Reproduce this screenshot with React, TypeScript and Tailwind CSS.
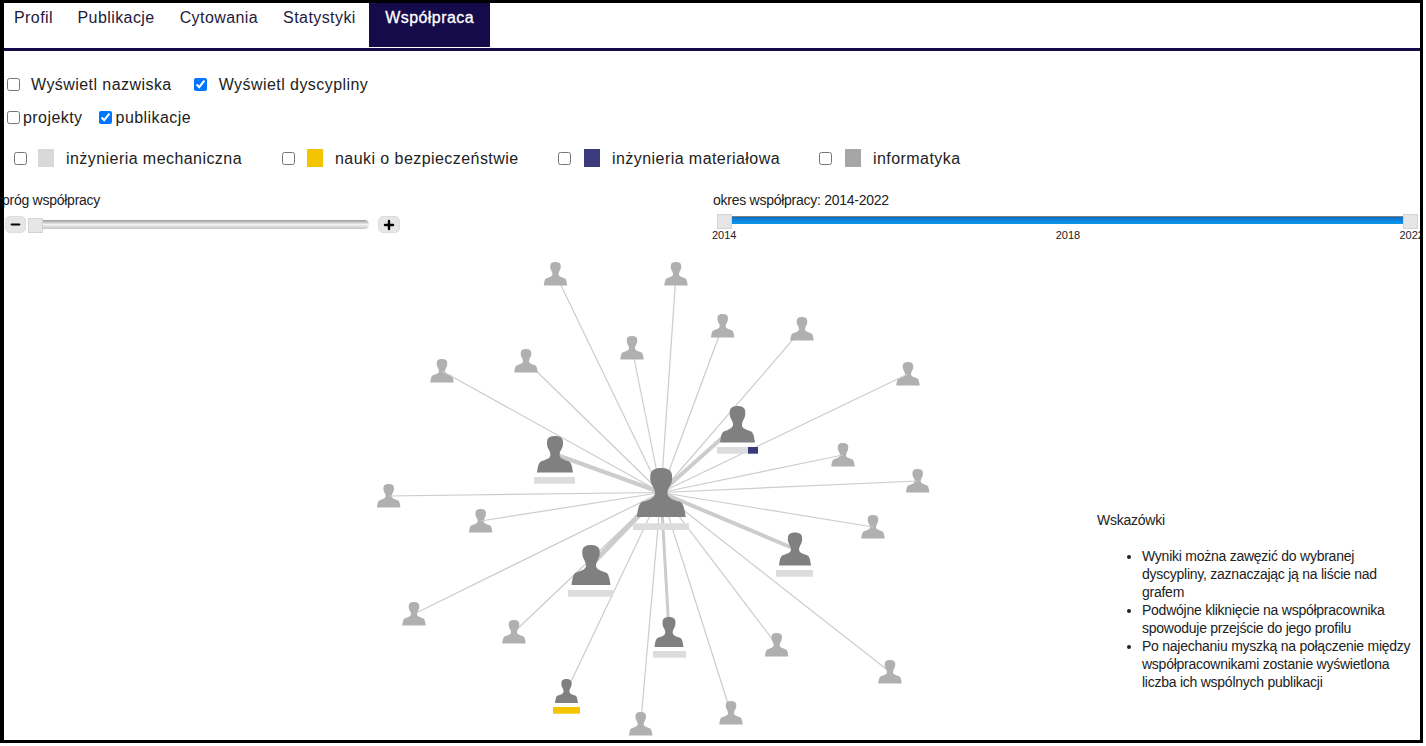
import { Minus, Plus } from "lucide-react";

const CX = 661;
const CY = 492.5;
const PERSON =
  "M50 0C60 0 71 3 72 14C73 24 72 30 67 38C64 44 62 48 63 54C65 62 76 65 88 69C95 72 97 80 100 100L0 100C3 80 5 72 12 69C24 65 35 62 37 54C38 48 36 44 33 38C28 30 27 24 28 14C29 3 40 0 50 0Z";

const small: [number, number, boolean][] = [
  [555.5, 262, false],
  [526, 349, false],
  [632, 336, false],
  [442, 359, true],
  [388.7, 484, true],
  [676, 262, false],
  [722.7, 314, false],
  [802, 317, false],
  [908, 362, true],
  [843, 443, true],
  [917.7, 469, true],
  [480.7, 509, true],
  [414, 602, false],
  [514, 620, false],
  [640.7, 712, false],
  [873, 515, true],
  [776.7, 633, false],
  [890, 660, false],
  [731, 701, false],
];

type Dark = {
  x: number;
  top: number;
  bottom: number;
  w: number;
  barX: number;
  barW: number;
  barY: number;
  edge: number;
  color?: string;
  extra?: number;
};

const dark: Dark[] = [
  { x: 555, top: 436, bottom: 472.5, w: 36, barX: 534, barW: 41, barY: 477, edge: 4 },
  { x: 737.5, top: 406, bottom: 442.5, w: 35, barX: 717, barW: 31, barY: 447, edge: 4, extra: 10 },
  { x: 795, top: 532.5, bottom: 565.5, w: 32, barX: 776, barW: 37, barY: 570, edge: 4 },
  { x: 591, top: 545, bottom: 585, w: 39, barX: 568, barW: 45, barY: 590, edge: 5 },
  { x: 669, top: 617, bottom: 647, w: 29, barX: 653, barW: 33, barY: 651, edge: 3 },
  { x: 566.5, top: 679, bottom: 703, w: 23, barX: 553, barW: 27, barY: 707, edge: 1.2, color: "#f5c400" },
];

function Person({ x, top, bottom, w, fill }: { x: number; top: number; bottom: number; w: number; fill: string }) {
  const h = bottom - top;
  return (
    <path d={PERSON} fill={fill} transform={`translate(${x - w / 2} ${top}) scale(${w / 100} ${h / 100})`} />
  );
}

function Graph() {
  return (
    <svg width={1090} height={495} viewBox="4 245 1090 495" className="block shrink-0">
      {small
        .filter((n) => !n[2])
        .map(([x, top]) => (
          <line key={x} x1={CX} y1={CY} x2={x} y2={top + 12} stroke="#cccccc" strokeWidth={1.2} />
        ))}
      {dark.map((n) => (
        <line key={n.x} x1={CX} y1={CY} x2={n.x} y2={(n.top + n.bottom) / 2} stroke="#cccccc" strokeWidth={n.edge} />
      ))}
      {small.map(([x, top]) => (
        <Person key={x} x={x} top={top} bottom={top + 23.5} w={23.5} fill="#b0b0b0" />
      ))}
      {small
        .filter((n) => n[2])
        .map(([x, top]) => (
          <line key={x} x1={CX} y1={CY} x2={x} y2={top + 12} stroke="#cccccc" strokeWidth={1.2} />
        ))}
      {dark.map((n) => (
        <g key={n.x}>
          <Person x={n.x} top={n.top} bottom={n.bottom} w={n.w} fill="#808080" />
          <rect x={n.barX} y={n.barY} width={n.barW} height={6.7} fill={n.color ?? "#dcdcdc"} />
          {n.extra ? <rect x={n.barX + n.barW} y={n.barY} width={n.extra} height={6.7} fill="#3a3a7c" /> : null}
        </g>
      ))}
      <Person x={661.2} top={468} bottom={517} w={49} fill="#808080" />
      <rect x={633} y={523.3} width={56} height={6.7} fill="#dcdcdc" />
    </svg>
  );
}

const tabs = ["Publikacje", "Cytowania", "Statystyki"];

const disciplines = [
  { name: "inżynieria mechaniczna", color: "bg-[#d9d9d9]", cls: "ml-[10px] w-[268px]", gap: "ml-[11px]" },
  { name: "nauki o bezpieczeństwie", color: "bg-[#f5c400]", cls: "w-[276px]", gap: "ml-[12px]" },
  { name: "inżynieria materiałowa", color: "bg-[#3a3a7c]", cls: "w-[261px]", gap: "ml-[13px]" },
  { name: "informatyka", color: "bg-[#a6a6a6]", cls: "", gap: "ml-[13px]" },
];

const sliderHandle = "bg-[#e6e6e6] border border-[#d3d3d3]";

export default function App() {
  return (
    <div className="min-h-[746px] bg-white font-['Liberation_Sans',Arial,sans-serif] text-[#222222]">
      <div className="w-[1423px] h-[743px] border-[3px] border-l-4 border-black overflow-hidden">
        <nav className="flex h-[45px] border-b-[3px] border-[#150a4a] box-content tracking-[0.42px]">
          <a className="pl-[10px] pr-[12px] h-[30px] text-[16px] leading-[30px] text-[#1d1a40]">Profil</a>
          {tabs.map((t) => (
            <a key={t} className="px-[12.5px] h-[30px] text-[16px] leading-[30px] text-[#1d1a40]">
              {t}
            </a>
          ))}
          <a className="h-[43.5px] w-[121px] ml-[1px] pl-[16px] text-[16px] leading-[30px] text-white bg-[#150a4a] [-webkit-text-stroke:0.3px_white]">
            Współpraca
          </a>
        </nav>

        <div className="flex items-center h-[24px] mt-[21px] pl-[3px] text-[16px] tracking-[0.44px]">
          <input type="checkbox" className="m-0 w-[13px] h-[13px]" readOnly />
          <span className="ml-[11px] pt-[2px]">Wyświetl nazwiska</span>
          <input type="checkbox" className="m-0 ml-[22px] w-[13px] h-[13px]" defaultChecked />
          <span className="ml-[12px] pt-[2px]">Wyświetl dyscypliny</span>
        </div>

        <div className="flex items-center h-[24px] mt-[9px] pl-[3px] text-[16px] tracking-[0.44px]">
          <input type="checkbox" className="m-0 w-[13px] h-[13px]" readOnly />
          <span className="ml-[3px] pt-[2px]">projekty</span>
          <input type="checkbox" className="m-0 ml-[16px] w-[13px] h-[13px]" defaultChecked />
          <span className="ml-[4px] pt-[2px]">publikacje</span>
        </div>

        <div className="flex items-center h-[24px] mt-[17px] text-[16px] tracking-[0.44px]">
          {disciplines.map((d) => (
            <div key={d.name} className={`flex items-center ${d.cls}`}>
              <input type="checkbox" className="m-0 w-[13px] h-[13px]" readOnly />
              <span className={`${d.gap} w-[16px] h-[18px] ${d.color}`} />
              <span className="ml-[12px] pt-[2px] whitespace-nowrap">{d.name}</span>
            </div>
          ))}
        </div>

        <div className="flex mt-[22px] h-[53px]">
          <div className="w-[709px] shrink-0">
            <div className="-ml-[2px] h-[16px] text-[14px] leading-[16px] tracking-[-0.26px]">próg współpracy</div>
            <div className="flex items-end h-[25px]">
              <button className="flex items-center justify-center w-[21px] h-[17px] ml-[1px] rounded-[5px] bg-[#e6e6e6] border border-[#dddddd]">
                <Minus size={13} strokeWidth={4} color="#000" />
              </button>
              <div className={`ml-[2px] w-[15px] h-[15px] ${sliderHandle}`} />
              <div className="w-[326px] h-[9px] mb-[4px] rounded-r-full bg-gradient-to-b from-[#9a9a9a] via-[#f2f2f2] to-[#c4c4c4]" />
              <button className="flex items-center justify-center w-[22px] h-[17px] ml-[9px] rounded-[5px] bg-[#e6e6e6] border border-[#dddddd]">
                <Plus size={14} strokeWidth={4} color="#000" />
              </button>
            </div>
          </div>
          <div className="w-[711px] shrink-0">
            <div className="h-[16px] text-[14px] leading-[16px] tracking-[-0.26px]">okres współpracy: 2014-2022</div>
            <div className="flex items-start ml-[4px] mt-[6px] w-[701px]">
              <div className={`w-[15px] h-[15px] shrink-0 ${sliderHandle}`} />
              <div className="flex-1 h-[8px] mt-[2px] border-t border-[#808080] bg-gradient-to-b from-[#0a6fc0] via-[#0a86e0] to-[#0f96e8]" />
              <div className={`w-[15px] h-[15px] shrink-0 ${sliderHandle}`} />
            </div>
            <div className="flex justify-between -ml-[1px] w-[712px] text-[11px] leading-[13px]">
              <span>2014</span>
              <span>2018</span>
              <span>2022</span>
            </div>
          </div>
        </div>

        <div className="flex h-[495px]">
          <Graph />
          <aside className="ml-[3px] pt-[266px] w-[322px] shrink-0 text-[14px] leading-[18px] tracking-[-0.25px]">
            <p>Wskazówki</p>
            <ul className="list-disc pl-[45px] mt-[18px]">
              <li>Wyniki można zawęzić do wybranej dyscypliny, zaznaczając ją na liście nad grafem</li>
              <li>Podwójne kliknięcie na współpracownika spowoduje przejście do jego profilu</li>
              <li>Po najechaniu myszką na połączenie między współpracownikami zostanie wyświetlona liczba ich wspólnych publikacji</li>
            </ul>
          </aside>
        </div>
      </div>
    </div>
  );
}
